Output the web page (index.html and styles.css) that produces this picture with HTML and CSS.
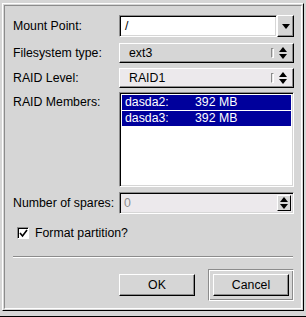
FILE: index.html
```html
<!DOCTYPE html>
<html lang="en">
<head>
    <meta charset="UTF-8">
    <title>RAID Device</title>
    <link rel="stylesheet" href="styles.css">
</head>
<body>
    <div class="window">
        <div class="frame">
            <div class="dialog">
                <div class="form">
                    <label class="label">Mount Point:</label>
                    <div class="combo">
                        <div class="entry">/</div>
                        <div class="combo-btn">
                            <span class="tri-down"></span>
                        </div>
                    </div>

                    <label class="label">Filesystem type:</label>
                    <div class="option first">
                        <span>ext3</span>
                        <span class="indicator">
                            <span class="etch"></span>
                            <span class="arrows"><span class="tri-up"></span><span class="tri-down"></span></span>
                        </span>
                    </div>

                    <label class="label">RAID Level:</label>
                    <div class="option prelight">
                        <span>RAID1</span>
                        <span class="indicator">
                            <span class="etch"></span>
                            <span class="arrows"><span class="tri-up"></span><span class="tri-down"></span></span>
                        </span>
                    </div>

                    <label class="label top">RAID Members:</label>
                    <div class="list">
                        <div class="row selected"><span class="dev">dasda2:</span><span>392 MB</span></div>
                        <div class="row selected"><span class="dev">dasda3:</span><span>392 MB</span></div>
                    </div>

                    <label class="label">Number of spares:</label>
                    <div class="spin">
                        <div class="spin-text">0</div>
                        <div class="spin-btns">
                            <span class="tri-up"></span>
                            <span class="tri-down"></span>
                        </div>
                    </div>
                </div>

                <div class="check">
                    <span class="box">
                        <svg width="9" height="9" viewBox="0 0 9 9"><path d="M1 4L3.5 7L8 1" stroke="#000" stroke-width="1.6" fill="none"/></svg>
                    </span>
                    <span>Format partition?</span>
                </div>

                <div class="separator"></div>

                <div class="buttons">
                    <div class="btn-slot"><button class="btn">OK</button></div>
                    <div class="btn-slot focus"><button class="btn">Cancel</button></div>
                </div>
            </div>
        </div>
    </div>
</body>
</html>
```

FILE: styles.css
```css
* {
    margin: 0;
    padding: 0;
    box-sizing: border-box;
}

body {
    background: #d6d6d6;
    font-family: "Liberation Sans", Arial, sans-serif;
    font-size: 12.3px;
    color: #000;
}

/* Outer window frame */
.window {
    width: 306px;
    height: 317px;
    background: #d6d6d6;
    padding: 3px 2px 0 2px;
    border-bottom: 1px solid #000;
}

.frame {
    height: 308px;
    border-left: 1px solid #fff;
    border-top: 1px solid #fff;
    border-right: 1px solid #000;
    border-bottom: 1px solid #000;
    padding: 1px;
}

.dialog {
    height: 100%;
    border-left: 1px solid #8c8c8c;
    border-top: 1px solid #8c8c8c;
    border-right: 1px solid #fff;
    border-bottom: 1px solid #fff;
    padding: 9px 7px 0 6px;
}

/* Arrow glyphs */
.tri-up,
.tri-down {
    display: block;
    width: 0;
    height: 0;
    border-left: 4px solid transparent;
    border-right: 4px solid transparent;
}

.tri-up {
    border-bottom: 5px solid #000;
}

.tri-down {
    border-top: 5px solid #000;
}

/* Form grid */
.form {
    display: grid;
    grid-template-columns: 108px 175px;
    row-gap: 5px;
    align-items: center;
}

.label {
    padding-left: 2px;
}

.label.top {
    align-self: start;
    padding-top: 2px;
}

/* Combo entry */
.combo {
    display: flex;
    height: 22px;
}

.entry {
    flex: 1;
    background: #fff;
    border-top: 1px solid #8c8c8c;
    border-left: 1px solid #8c8c8c;
    border-right: 1px solid #fff;
    border-bottom: 1px solid #fff;
    box-shadow: inset 1px 1px 0 #000, inset -1px -1px 0 #d6d6d6;
    padding: 3px 5px;
    line-height: 14px;
}

.combo-btn {
    width: 17px;
    display: flex;
    align-items: center;
    justify-content: center;
    border-top: 1px solid #fff;
    border-left: 1px solid #fff;
    border-right: 1px solid #000;
    border-bottom: 1px solid #000;
    box-shadow: inset -1px -1px 0 #8c8c8c;
}

/* Option menus */
.option {
    height: 20px;
    display: flex;
    align-items: center;
    justify-content: space-between;
    padding: 0 6px 0 9px;
    border-top: 1px solid #fff;
    border-left: 1px solid #fff;
    border-right: 1px solid #000;
    border-bottom: 1px solid #000;
    box-shadow: inset -1px -1px 0 #8c8c8c;
    background: #d6d6d6;
}

.option.first {
    margin-top: 1px;
}

.option.prelight {
    background: #ece9ec;
}

.indicator {
    display: flex;
    align-items: center;
    gap: 5px;
}

.arrows {
    display: flex;
    flex-direction: column;
    gap: 2px;
}

.etch {
    width: 3px;
    height: 10px;
    border-left: 1px solid #8c8c8c;
    border-top: 1px solid #8c8c8c;
    border-right: 1px solid #fff;
    border-bottom: 1px solid #fff;
}

/* Members list */
.list {
    height: 95px;
    margin-top: -1px;
    background: #fff;
    border-top: 1px solid #8c8c8c;
    border-left: 1px solid #8c8c8c;
    border-right: 1px solid #fff;
    border-bottom: 1px solid #fff;
    box-shadow: inset 1px 1px 0 #000, inset -1px -1px 0 #d6d6d6;
    padding: 2px;
}

.row {
    height: 16px;
    line-height: 15px;
    display: flex;
    padding-left: 3px;
    color: #fff;
}

.row.selected {
    background: #00009c;
    border-bottom: 1px solid #fff;
}

.dev {
    width: 70px;
}

/* Spin button */
.spin {
    display: flex;
    height: 22px;
    background: #ece9ec;
    border-top: 1px solid #8c8c8c;
    border-left: 1px solid #8c8c8c;
    border-right: 1px solid #fff;
    border-bottom: 1px solid #fff;
    box-shadow: inset 1px 1px 0 #000, inset -1px -1px 0 #d6d6d6;
}

.spin-text {
    flex: 1;
    color: #8c8c8c;
    padding: 3px 4px;
    line-height: 14px;
}

.spin-btns {
    width: 14px;
    margin: 2px 2px 2px 0;
    display: flex;
    flex-direction: column;
    align-items: center;
    justify-content: space-around;
    background: #d6d6d6;
    border-top: 1px solid #fff;
    border-left: 1px solid #fff;
    border-right: 1px solid #000;
    border-bottom: 1px solid #000;
}

/* Checkbox */
.check {
    display: flex;
    align-items: center;
    gap: 6px;
    height: 14px;
    margin: 12px 0 0 6px;
}

.box {
    width: 12px;
    height: 12px;
    background: #fff;
    border-top: 1px solid #8c8c8c;
    border-left: 1px solid #8c8c8c;
    border-right: 1px solid #fff;
    border-bottom: 1px solid #fff;
    box-shadow: inset 1px 1px 0 #000;
    display: flex;
    align-items: center;
    justify-content: center;
}

/* Separator */
.separator {
    margin: 16px 1px 0 2px;
    border-top: 1px solid #8c8c8c;
    border-bottom: 1px solid #fff;
}

/* Buttons */
.buttons {
    display: flex;
    justify-content: flex-end;
    gap: 8px;
    margin-top: 11px;
}

.btn-slot {
    padding: 3px;
    border: 2px solid transparent;
}

.btn-slot.focus {
    border-top: 1px solid #8c8c8c;
    border-left: 1px solid #8c8c8c;
    border-right: 1px solid #fff;
    border-bottom: 1px solid #fff;
    padding: 4px;
    box-shadow: inset 1px 1px 0 #fff, inset -1px -1px 0 #8c8c8c;
}

.btn {
    display: block;
    width: 76px;
    height: 22px;
    font: inherit;
    background: #d6d6d6;
    border-top: 1px solid #fff;
    border-left: 1px solid #fff;
    border-right: 1px solid #000;
    border-bottom: 1px solid #000;
    box-shadow: inset -1px -1px 0 #8c8c8c;
}
```
